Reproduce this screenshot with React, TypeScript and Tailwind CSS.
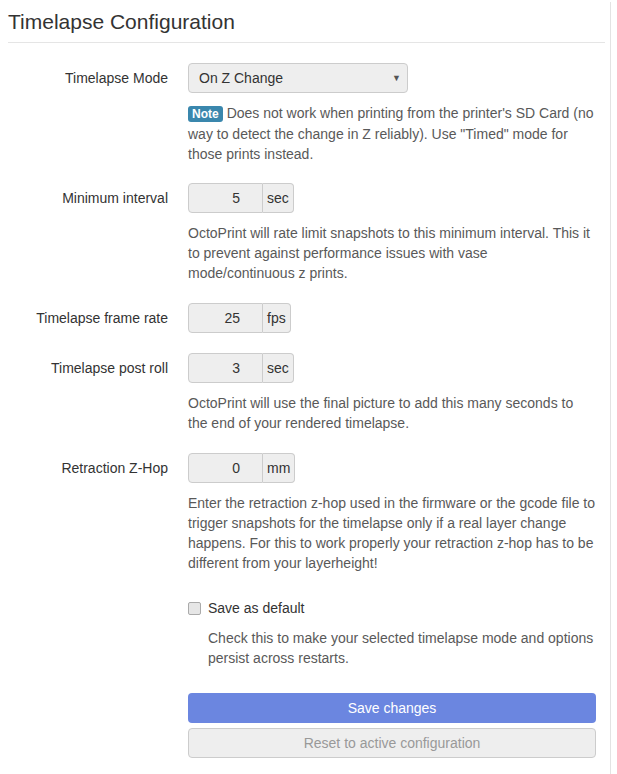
import React from "react";

type Row = {
  label: string;
  value: string;
  unit: string;
  help?: string;
};

const rows: Row[] = [
  {
    label: "Minimum interval",
    value: "5",
    unit: "sec",
    help: "OctoPrint will rate limit snapshots to this minimum interval. This it to prevent against performance issues with vase mode/continuous z prints.",
  },
  { label: "Timelapse frame rate", value: "25", unit: "fps" },
  {
    label: "Timelapse post roll",
    value: "3",
    unit: "sec",
    help: "OctoPrint will use the final picture to add this many seconds to the end of your rendered timelapse.",
  },
  {
    label: "Retraction Z-Hop",
    value: "0",
    unit: "mm",
    help: "Enter the retraction z-hop used in the firmware or the gcode file to trigger snapshots for the timelapse only if a real layer change happens. For this to work properly your retraction z-hop has to be different from your layerheight!",
  },
];

const Help = ({ children }: { children: React.ReactNode }) => (
  <p className="mt-[10px] text-[#595959] leading-5">{children}</p>
);

export default function App() {
  return (
    <div
      className="w-[611px] h-[774px] border-r border-[#e3e3e3] bg-white text-[14px] leading-5 text-[#333]"
      style={{ fontFamily: '"Liberation Sans", Arial, sans-serif' }}
    >
      <div className="pl-2 pr-[5px]">
        {/* Legend */}
        <div className="mt-[2px] h-[41px] border-b border-[#e5e5e5] text-[21px] leading-[40px] text-[#333]">
          Timelapse Configuration
        </div>

        <div className="mt-5 pr-[9px]">
          {/* Timelapse mode */}
          <div className="flex">
            <div className="w-[160px] shrink-0 text-right leading-[30px]">
              Timelapse Mode
            </div>
            <div className="ml-5 flex-1">
              <div className="flex h-[30px] w-[220px] items-center justify-between rounded border border-[#ccc] bg-[#eee] pl-[10px] pr-[6px] text-[#333]">
                <span>On Z Change</span>
                <span className="text-[9px] text-[#555]">▼</span>
              </div>
              <Help>
                <span className="mr-1 rounded-[3px] bg-[#3a87ad] px-1 py-px text-[12px] font-bold text-white">
                  Note
                </span>
                Does not work when printing from the printer's SD Card (no
                way to detect the change in Z reliably). Use "Timed" mode for
                those prints instead.
              </Help>
            </div>
          </div>

          {rows.map((row, i) => (
            <div key={i} className={`flex ${i === 0 ? "mt-[19px]" : "mt-5"}`}>
              <div className="w-[160px] shrink-0 text-right leading-[30px]">
                {row.label}
              </div>
              <div className="ml-5 flex-1">
                <div className="flex h-[30px]">
                  <div className="flex w-[75px] items-center justify-end rounded-l border border-[#ccc] bg-[#eee] pr-[22px]">
                    {row.value}
                  </div>
                  <div className="flex items-center rounded-r border border-l-0 border-[#ccc] bg-[#eee] px-[4px]">
                    {row.unit}
                  </div>
                </div>
                {row.help && <Help>{row.help}</Help>}
              </div>
            </div>
          ))}

          {/* Save as default */}
          <div className="ml-[180px] mt-5 pt-[5px]">
            <label className="flex items-center">
              <span className="h-[13px] w-[13px] rounded-[2px] border border-[#aaa] bg-[#e6e6e6]" />
              <span className="ml-[7px]">Save as default</span>
            </label>
            <p className="mt-[10px] pl-5 text-[#595959]">
              Check this to make your selected timelapse mode and options
              persist across restarts.
            </p>
          </div>

          {/* Buttons */}
          <div className="ml-[180px] mt-[25px] flex flex-col gap-[5px]">
            <button className="h-[30px] w-full rounded bg-[#6b86e0] text-white">
              Save changes
            </button>
            <button className="h-[30px] w-full rounded border border-[#ccc] bg-[#eee] text-[#999]">
              Reset to active configuration
            </button>
          </div>
        </div>
      </div>
    </div>
  );
}
